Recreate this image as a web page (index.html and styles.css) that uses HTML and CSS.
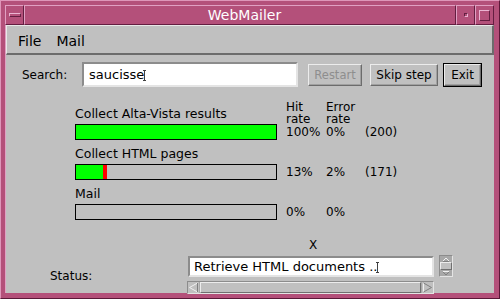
FILE: index.html
```html
<!DOCTYPE html>
<html lang="en">
<head>
    <meta charset="UTF-8">
    <title>WebMailer</title>
    <link rel="stylesheet" href="styles.css">
</head>
<body>
<div class="window">
    <div class="titlebar">
        <div class="tb-btn menu-btn"><span class="tb-bar"></span></div>
        <div class="title">WebMailer</div>
        <div class="tb-btn min-btn"><span class="tb-dot"></span></div>
        <div class="tb-btn max-btn"><span class="tb-box"></span></div>
    </div>
    <div class="client">
        <div class="menubar">
            <span class="menu-item">File</span>
            <span class="menu-item">Mail</span>
        </div>

        <div class="search-row">
            <span class="search-label">Search:</span>
            <div class="field search-field">saucisse<span class="caret"></span></div>
            <button class="btn btn-restart" disabled>Restart</button>
            <button class="btn btn-skip">Skip step</button>
            <button class="btn btn-exit">Exit</button>
        </div>

        <div class="progress">
            <div class="p-label">Collect Alta-Vista results</div>
            <div class="p-head">Hit<br>rate</div>
            <div class="p-head">Error<br>rate</div>
            <div></div>

            <div class="bar"><span class="fill" style="width:100%"></span></div>
            <div class="p-val">100%</div>
            <div class="p-val">0%</div>
            <div class="p-val">(200)</div>

            <div class="p-label">Collect HTML pages</div>
            <div></div><div></div><div></div>

            <div class="bar"><span class="fill" style="width:13.5%"></span><span class="err" style="width:2%"></span></div>
            <div class="p-val">13%</div>
            <div class="p-val">2%</div>
            <div class="p-val">(171)</div>

            <div class="p-label">Mail</div>
            <div></div><div></div><div></div>

            <div class="bar"></div>
            <div class="p-val">0%</div>
            <div class="p-val">0%</div>
            <div></div>
        </div>

        <div class="status">
            <div class="x-mark">X</div>
            <div class="status-label">Status:</div>
            <div class="field status-field">Retrieve HTML documents ..<span class="caret"></span></div>
            <div class="vscroll">
                <span class="v-arrow"><svg width="10" height="5" viewBox="0 0 10 5"><path d="M1.5 4.5 L5 1 L8.5 4.5" fill="none" stroke="#f0f0f0"/><path d="M1.5 4.5 H8.5" stroke="#808080"/></svg></span>
                <span class="v-thumb"></span>
                <span class="v-arrow"><svg width="10" height="5" viewBox="0 0 10 5"><path d="M1.5 0.5 H8.5" stroke="#f0f0f0"/><path d="M1.5 0.5 L5 4 L8.5 0.5" fill="none" stroke="#808080"/></svg></span>
            </div>
            <div class="hscroll">
                <span class="h-arrow"><svg width="11" height="11" viewBox="0 0 11 11"><path d="M9.5 1 L1.5 5.5 L9.5 10" fill="none" stroke="#f0f0f0"/><path d="M9.5 1 V10" stroke="#808080"/></svg></span>
                <span class="h-thumb"></span>
                <span class="h-arrow"><svg width="11" height="11" viewBox="0 0 11 11"><path d="M1.5 1 V10" stroke="#f0f0f0"/><path d="M1.5 1 L9.5 5.5 L1.5 10" fill="none" stroke="#808080"/></svg></span>
            </div>
        </div>
    </div>
</div>
</body>
</html>
```

FILE: styles.css
```css
body{
    margin: 0;
    font-family: 'DejaVu Sans', Verdana, sans-serif;
    font-size: 12px;
    color: black;
    background-color: #c0c0c0;
}
.window{
    width: 500px;
    height: 299px;
    box-sizing: border-box;
    background-color: rgb(180, 80, 122);
    border: 1px solid;
    border-color: rgb(222, 150, 185) rgb(90, 24, 56) rgb(90, 24, 56) rgb(222, 150, 185);
    padding: 4px 5px 5px 4px;
    display: flex;
    flex-direction: column;
}
.titlebar{
    display: flex;
    height: 20px;
    flex-shrink: 0;
}
.tb-btn{
    width: 19px;
    box-sizing: border-box;
    border: 1px solid;
    border-color: rgb(225, 160, 195) rgb(100, 30, 65) rgb(100, 30, 65) rgb(225, 160, 195);
    display: flex;
    align-items: center;
    justify-content: center;
}
.tb-bar{
    width: 10px;
    height: 2px;
    border: 1px solid;
    border-color: rgb(235, 180, 210) rgb(100, 30, 65) rgb(100, 30, 65) rgb(235, 180, 210);
}
.tb-dot{
    width: 2px;
    height: 2px;
    border: 1px solid;
    border-color: rgb(100, 30, 65) rgb(235, 180, 210) rgb(235, 180, 210) rgb(100, 30, 65);
}
.tb-box{
    width: 9px;
    height: 9px;
    border: 1px solid;
    border-color: rgb(235, 180, 210) rgb(100, 30, 65) rgb(100, 30, 65) rgb(235, 180, 210);
}
.title{
    flex: 1;
    box-sizing: border-box;
    border: 1px solid;
    border-color: rgb(225, 160, 195) rgb(100, 30, 65) rgb(100, 30, 65) rgb(225, 160, 195);
    color: white;
    font-size: 14px;
    line-height: 18px;
    text-align: center;
    padding-left: 9px;
}
.client{
    flex: 1;
    background-color: #c0c0c0;
    border-left: 1px solid rgb(225, 160, 195);
    display: flex;
    flex-direction: column;
}
.menubar{
    box-sizing: border-box;
    height: 30px;
    border-top: 1px solid #e8e8e8;
    border-left: 1px solid #e8e8e8;
    border-bottom: 2px solid #6c6c6c;
    border-right: 2px solid #6c6c6c;
    display: flex;
    align-items: center;
    padding-left: 11px;
    padding-top: 2px;
    font-size: 14px;
}
.menu-item{
    margin-right: 15px;
}
.search-row{
    display: flex;
    align-items: center;
    margin-top: 7px;
    padding-left: 16px;
    height: 25px;
}
.search-label{
    width: 60px;
}
.field{
    box-sizing: border-box;
    background-color: white;
    border: 2px solid;
    border-color: #8c8c8c #e4e4e4 #e4e4e4 #8c8c8c;
    white-space: nowrap;
    overflow: hidden;
}
.search-field{
    width: 216px;
    height: 25px;
    line-height: 21px;
    padding-left: 5px;
    font-size: 13px;
}
.caret{
    display: inline-block;
    width: 3px;
    height: 9px;
    margin-left: -1px;
    vertical-align: -2px;
    border-top: 1px solid #404040;
    border-bottom: 1px solid #404040;
    background: linear-gradient(#404040, #404040) center / 1px 100% no-repeat;
}
.btn{
    font-family: 'DejaVu Sans', Verdana, sans-serif;
    font-size: 12px;
    height: 22px;
    box-sizing: border-box;
    background-color: #c0c0c0;
    color: black;
    border: 1px solid;
    border-color: #ececec #6c6c6c #6c6c6c #ececec;
    box-shadow: inset -1px -1px 0 #a0a0a0;
    padding: 0;
}
.btn-restart{
    width: 54px;
    margin-left: 10px;
    color: #8e8e8e;
    font-size: 11.5px;
}
.btn-skip{
    width: 68px;
    margin-left: 8px;
}
.btn-exit{
    width: 37px;
    margin-left: 6px;
    outline: 1px solid black;
}
.progress{
    display: grid;
    grid-template-columns: 211px 40px 39px auto;
    grid-template-rows: 24px 16px 24px 16px 24px 16px;
    margin-top: 13px;
    margin-left: 69px;
    align-items: center;
}
.p-label{
    padding-top: 2px;
    font-size: 12.5px;
}
.p-head{
    line-height: 12px;
    padding-top: 1px;
}
.bar{
    width: 202px;
    height: 16px;
    box-sizing: border-box;
    border: 1px solid black;
    background-color: #c0c0c0;
    display: flex;
}
.fill{
    background-color: #00ff00;
}
.err{
    background-color: #ff0000;
}
.status{
    display: grid;
    grid-template-columns: 182px 246px 5px 14px;
    grid-template-rows: 22px 21px 4px 12px;
    margin-top: 14px;
}
.x-mark{
    grid-column: 2;
    grid-row: 1;
    text-align: center;
    align-self: center;
    padding-left: 4px;
}
.status-label{
    grid-column: 1;
    grid-row: 2 / 5;
    align-self: center;
    padding-left: 44px;
    padding-top: 2px;
}
.status-field{
    grid-column: 2;
    grid-row: 2;
    height: 21px;
    line-height: 17px;
    padding-left: 4px;
    font-size: 13px;
}
.vscroll{
    grid-column: 4;
    grid-row: 2;
    width: 14px;
    height: 22px;
    margin-top: -1px;
    box-sizing: border-box;
    border: 1px solid;
    border-color: #8c8c8c #e4e4e4 #e4e4e4 #8c8c8c;
    background-color: #a8a8a8;
    display: flex;
    flex-direction: column;
    align-items: center;
}
.v-arrow{
    height: 6px;
    display: flex;
    align-items: center;
}
.v-thumb{
    width: 10px;
    height: 6px;
    background-color: #c0c0c0;
    border: 1px solid;
    border-color: #ececec #707070 #707070 #ececec;
}
.hscroll{
    grid-column: 2;
    grid-row: 4;
    margin-left: -1px;
    height: 13px;
    box-sizing: border-box;
    border: 1px solid;
    border-color: #8c8c8c #e4e4e4 #e4e4e4 #8c8c8c;
    background-color: #a8a8a8;
    display: flex;
}
.h-arrow{
    width: 11px;
    display: flex;
    align-items: center;
    background-color: #c0c0c0;
}
.h-thumb{
    flex: 1;
    background-color: #c0c0c0;
    border: 1px solid;
    border-color: #ececec #707070 #707070 #ececec;
    margin: 0 1px;
}
```
